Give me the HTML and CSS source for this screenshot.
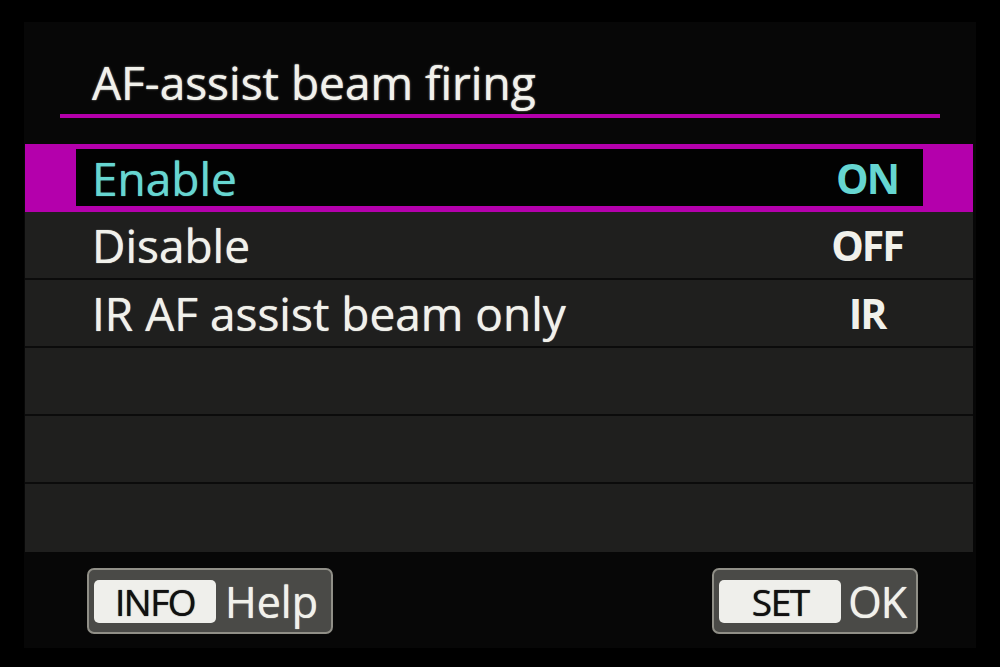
FILE: index.html
```html
<!DOCTYPE html>
<html lang="en">
<head>
<meta charset="utf-8">
<title>AF-assist beam firing</title>
<link rel="stylesheet" href="styles.css">
</head>
<body>
<div class="screen">
  <div class="title">AF-assist beam firing</div>
  <div class="list">
    <div class="row selected"><span class="label">Enable</span><span class="value">ON</span></div>
    <div class="row"><span class="label">Disable</span><span class="value">OFF</span></div>
    <div class="row"><span class="label">IR AF assist beam only</span><span class="value">IR</span></div>
    <div class="row"></div>
    <div class="row"></div>
    <div class="row last"></div>
  </div>
  <div class="footer">
    <div class="btn btn-help"><span class="key key-info">INFO</span><span class="btn-label">Help</span></div>
    <div class="btn btn-ok"><span class="key key-set">SET</span><span class="btn-label">OK</span></div>
  </div>
</div>
</body>
</html>
```
FILE: styles.css
```css
html, body {
  margin: 0;
  padding: 0;
  background: #000;
  width: 1000px;
  height: 667px;
  overflow: hidden;
  font-family: "Open Sans", "Noto Sans", sans-serif;
  color: #f1f1eb;
}

.screen {
  margin: 22px 24px 0 24px;
  width: 952px;
  height: 626px;
  background: #070707;
  display: flex;
  flex-direction: column;
}

.title {
  margin: 0 36px;
  padding: 32px 0 4px 32px;
  border-bottom: 4px solid #b300aa;
  font-size: 46px;
  line-height: 56px;
  text-shadow: 0 0 1px #f1f1eb, 0 0 3px rgba(255, 255, 240, 0.3);
}

.list {
  margin: 26px 3px 0 1px;
  display: flex;
  flex-direction: column;
}

.row {
  box-sizing: border-box;
  height: 68px;
  display: flex;
  align-items: center;
  justify-content: space-between;
  padding: 0 61px 0 67px;
  background: #1f1f1e;
  border-bottom: 2px solid #0b0b0b;
}

.row.last {
  border-bottom: none;
}

.row.selected {
  background: #020202;
  border-style: solid;
  border-color: #b400ac;
  border-width: 5px 50px 6px 51px;
  padding: 0 11px 0 16px;
  color: #66d6d1;
}

.label {
  font-size: 46px;
  white-space: nowrap;
  text-shadow: 0 0 1px currentColor;
}

.value {
  width: 90px;
  text-align: center;
  font-size: 41px;
  font-weight: 700;
  letter-spacing: -2px;
}

.footer {
  display: flex;
  justify-content: space-between;
  padding: 16px 58px 0 63px;
}

.btn {
  box-sizing: border-box;
  height: 66px;
  display: flex;
  align-items: center;
  padding: 0 11px 0 5px;
  background: #4a4a47;
  border: 2px solid #908f87;
  border-radius: 7px;
}

.btn-help {
  padding-right: 13px;
}

.btn-ok {
  padding-right: 10px;
}

.key {
  box-sizing: border-box;
  width: 122px;
  height: 43px;
  margin-top: 1px;
  display: flex;
  align-items: center;
  justify-content: center;
  background: #efefeb;
  border-radius: 5px;
  color: #111;
  font-size: 37px;
  letter-spacing: -1.5px;
  text-shadow: 0 0 1px #111;
}

.btn-label {
  margin-left: 9px;
  font-size: 43px;
  line-height: 1;
  text-shadow: 0 0 1px #f1f1eb;
}

.key-set + .btn-label {
  margin-left: 7px;
  letter-spacing: -1px;
}
```
